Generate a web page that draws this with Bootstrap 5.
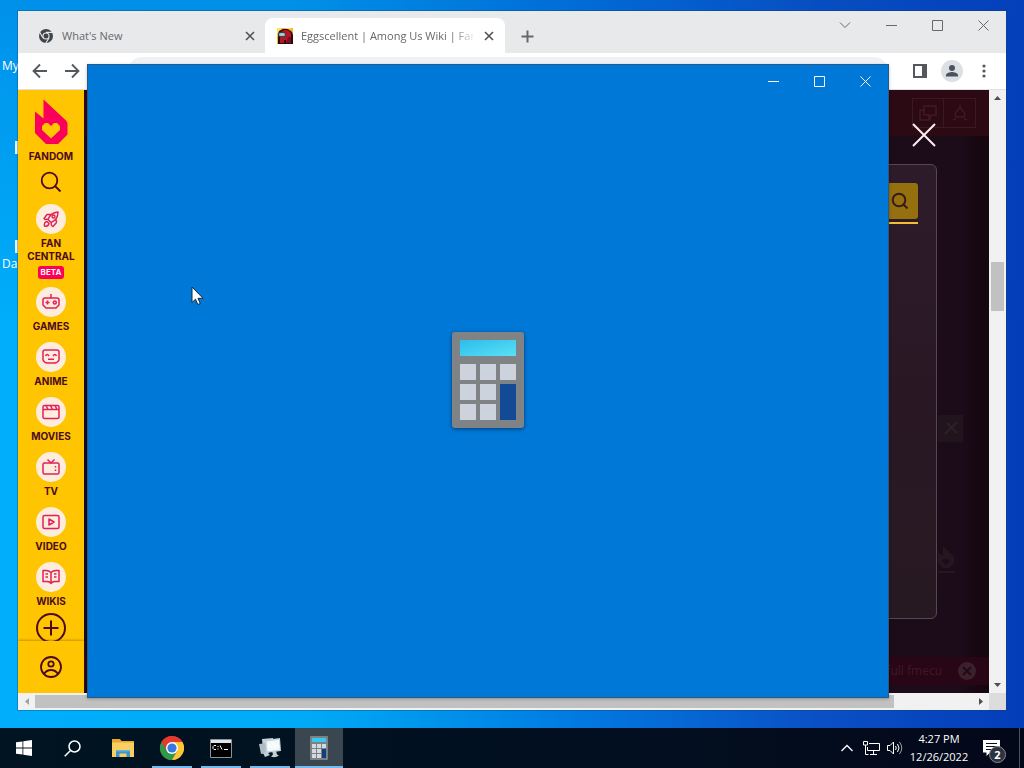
<!DOCTYPE html>
<html lang="en">
<head>
<meta charset="utf-8">
<meta name="viewport" content="width=device-width, initial-scale=1">
<title>Desktop</title>
<link href="https://cdn.jsdelivr.net/npm/bootstrap@5.3.0/dist/css/bootstrap.min.css" rel="stylesheet">
<style>
  body { font-family: "Open Sans", "Noto Sans", sans-serif; font-size: 12px; line-height: 16px; }
  button { border: 0; padding: 0; background: none; color: inherit; }
  svg { display: block; }
  .line { fill: none; stroke: currentColor; }

  .wallpaper { background:
    linear-gradient(to bottom, rgba(0,70,190,.28), rgba(0,70,190,0) 45%),
    linear-gradient(to right, #00aefb 0, #00aaf6 30%, #0082e4 52%, #0a50c4 80%, #043db8 100%); }
  .shortcut { position: absolute; left: 2px; color: #fff; }
  .shortcut-file { position: absolute; left: 15px; width: 12px; height: 13px; background: #e4f3fd; }

  /* Browser window */
  .browser { position: absolute; inset: 11px 18px 18px 18px; background: #fff; box-shadow: 0 0 0 1px rgba(20,60,110,.35); }
  .tab-strip { height: 42px; background: #e8e9eb; color: #66686b; }
  .tab-item { width: 240px; height: 35px; margin-top: 7px; padding: 0 8px 0 12px; }
  .tab-item.first { margin-left: 7px; padding: 0 7px 0 13px; }
  .tab-item.current { background: #fff; border-radius: 8px 8px 0 0; }
  .tab-title { white-space: nowrap; overflow: hidden; font-size: 11px; }
  .current .tab-title { -webkit-mask-image: linear-gradient(to right, #000 150px, transparent 176px); mask-image: linear-gradient(to right, #000 150px, transparent 176px); }
  .tab-close { width: 16px; height: 16px; color: #505255; }
  .caption-btn { width: 46px; height: 28px; display: flex; align-items: center; justify-content: center; }
  .tool-row { height: 37px; padding: 0 6px 0 2px; color: #54575b; border-bottom: 1px solid #e0e0e2; }
  .tool-btn { width: 32px; height: 32px; display: flex; align-items: center; justify-content: center; }
  .address { height: 28px; border: 0; border-radius: 14px; background: #eff1f4; min-width: 0; }
  .avatar { width: 22px; height: 22px; background: #dcdfe4; }

  /* Fandom rail */
  .rail { width: 66px; background: #ffc500; color: #4d0a1c; font: 700 10px/13px Inter, Roboto, sans-serif; }
  .rail a { color: inherit; text-decoration: none; text-align: center; display: flex; flex-direction: column; align-items: center; flex: none; }
  .rail-list { padding-top: 9px; min-height: 0; }
  .rail-brand { gap: 5px; }
  .rail-find { margin: 8px 0 11px; }
  .rail-item { padding-bottom: 9px; }
  .rail-item.last { padding-bottom: 5px; }
  .disc { width: 30px; height: 30px; border-radius: 50%; background: #feecdc; color: #e0205a; display: flex; align-items: center; justify-content: center; margin-bottom: 3px; }
  .beta { background: #fa005a; color: #ffeef2; border-radius: 3px; width: 26px; font-size: 8px; margin-top: 3px; }
  .rail-foot { height: 52px; box-shadow: 0 -1px 2px rgba(120,80,0,.4); z-index: 1; background: #ffc500; }

  /* Wiki page under the overlay */
  .wiki { background: linear-gradient(to right, transparent 97%, #16060f 99%), #1c0b19; }
  .wiki-head { height: 46px; background: #2c0a14; padding: 8px 13px; }
  .head-tool { width: 32px; height: 30px; border: 1px solid #3d1721; color: #401a24; display: flex; align-items: center; justify-content: center; }
  .head-tool + .head-tool { border-left: 0; }
  .close-overlay { position: absolute; right: 53px; top: 33px; color: #fbeef0; }
  .search-modal { position: absolute; left: 40px; right: 52px; top: 74px; bottom: 74px; background: linear-gradient(#2e1b2a, #291824 50%, #271922); border: 1px solid #584650; border-radius: 6px; padding: 18px; }
  .search-field { background: transparent; border: 0; min-width: 0; }
  .search-line { border-bottom: 2px solid #f3bd35; padding-bottom: 3px; }
  .search-go { width: 36px; height: 36px; background: #95700f; color: #3a1a1a; border-radius: 0 3px 3px 0; display: flex; align-items: center; justify-content: center; }
  .ghost-tile { position: absolute; right: 26px; top: 325px; width: 25px; height: 27px; background: #21141d; color: #2e2128; }
  .ghost-flame { position: absolute; right: 34px; top: 456px; color: #26161f; }
  .promo { position: absolute; left: 0; right: 0; bottom: 8px; height: 28px; padding-right: 13px; background: #280615; color: #411826; }
  .promo-x { width: 18px; height: 18px; border-radius: 50%; background: #3b212c; color: #210a16; }

  .scroll-v { width: 17px; background: #f1f1f1; }
  .scroll-h { height: 17px; background: #f1f1f1; color: #505050; }
  .scroll-v .thumb { width: 13px; height: 49px; background: #c1c1c1; }
  .scroll-h .thumb { background: #c1c1c1; height: 13px; }
  .arrow { width: 17px; height: 17px; display: flex; align-items: center; justify-content: center; color: #505050; flex: none; }
  .corner { width: 17px; height: 17px; background: #dcdcdc; }

  /* Calculator splash */
  .calc { position: absolute; inset: 65px 136px 31px 88px; padding-bottom: 2px; background: #0078d7; box-shadow: 0 0 0 1px #275987, 0 1px 3px 1px rgba(0,0,0,.25); color: #fff; }
  .calc-bar { position: absolute; top: 0; left: 0; right: 0; }
  .calc-bar .caption-btn { height: 32px; }
  .calc-logo { filter: drop-shadow(0 1px 2px rgba(0,20,60,.6)); }
  .pointer { position: absolute; left: 191px; top: 286px; }

  /* Taskbar */
  .taskbar { height: 40px; background: linear-gradient(to right, #001421, #020f20 60%, #030819); color: #fff; }
  .task-btn { width: 48px; height: 40px; display: flex; align-items: center; justify-content: center; position: relative; }
  .task-apps { gap: 1px; margin-left: 3px; }
  .task-btn.open::after { content: ""; position: absolute; left: 4px; right: 4px; bottom: 0; height: 2px; background: #76b9ed; }
  .task-btn.focused { background: #3a4750; }
  .task-btn.focused::after { left: 0; right: 0; }
  .tray-btn { width: 24px; height: 40px; display: flex; align-items: center; justify-content: center; }
  .clock { width: 64px; font-size: 11px; line-height: 18px; }
  .notice { width: 40px; height: 40px; position: relative; display: flex; align-items: center; justify-content: center; }
  .notice-count { position: absolute; left: 18px; top: 18px; width: 17px; height: 17px; border-radius: 50%; background: #2c333e; border: 1px solid #858b94; font: 700 11px/15px "Open Sans", sans-serif; }
  .show-desktop { width: 5px; height: 40px; border-left: 1px solid #4b5260; }
</style>
</head>
<body>
<div class="d-flex flex-column vh-100 overflow-hidden">
  <main class="wallpaper flex-grow-1 position-relative overflow-hidden">
    <span class="shortcut" style="top:58px">My</span>
    <span class="shortcut-file" style="top:141px"></span>
    <span class="shortcut-file" style="top:240px"></span>
    <span class="shortcut" style="top:256px">Da</span>

    <section class="browser d-flex flex-column" aria-label="Browser">
      <div class="tab-strip d-flex">
        <div class="tab-item first d-flex align-items-center gap-2">
          <svg width="16" height="16" viewBox="0 0 16 16" class="flex-shrink-0"><circle cx="8" cy="8" r="7" fill="#414449"/><circle cx="8" cy="8" r="3.600" fill="#e8e9eb"/><circle cx="8" cy="8" r="2.500" fill="#414449"/><path d="M8 4.400h7.200M4.900 9.800 1.400 3.700M11.100 9.800l-3.700 6" stroke="#e8e9eb" stroke-width="1.100"/></svg>
          <span class="tab-title flex-grow-1">What's New</span>
          <button class="tab-close" aria-label="Close tab"><svg width="16" height="16" viewBox="0 0 16 16" class="line" stroke-width="1.600"><path d="M4 4l8 8M12 4l-8 8"/></svg></button>
        </div>
        <div class="tab-item current d-flex align-items-center gap-2">
          <svg width="16" height="16" viewBox="0 0 16 16" class="flex-shrink-0"><path fill="#efbd25" d="M0 0h16v16H0z"/><path fill="#f9e264" d="M0 0h5L2 5 0 6zM9 0h5l-4 4z"/><path fill="#2b0a10" d="M1 16V7l1-4 4-2h5l4 3 1 3v9z"/><path fill="#b71525" d="M3 15V8l1-4 3-2h4l3 3v10H9v-3H7v3z"/><path fill="#7c0d1e" d="M11 9h3v6h-5l1-3z"/><rect x="1" y="4" width="8" height="5" rx="2.300" fill="#34424e"/><rect x="2" y="5" width="6" height="3" rx="1.500" fill="#a5c9d7"/></svg>
          <span class="tab-title flex-grow-1">Eggscellent | Among Us Wiki | Fan</span>
          <button class="tab-close" aria-label="Close tab"><svg width="16" height="16" viewBox="0 0 16 16" class="line" stroke-width="1.600"><path d="M4 4l8 8M12 4l-8 8"/></svg></button>
        </div>
        <button class="ms-3 mt-2" aria-label="New tab"><svg width="13" height="13" viewBox="0 0 13 13" class="line" stroke-width="2"><path d="M6.500 .5v12M.5 6.500h12"/></svg></button>
        <div class="d-flex ms-auto">
          <button class="caption-btn" aria-label="Search tabs"><svg width="12" height="12" viewBox="0 0 12 12" class="line"><path d="M1 3.500l5 5 5-5"/></svg></button>
          <button class="caption-btn" aria-label="Minimize"><svg width="11" height="11" viewBox="0 0 11 11" class="line"><path d="M0 5.500h11"/></svg></button>
          <button class="caption-btn" aria-label="Maximize"><svg width="11" height="11" viewBox="0 0 11 11" class="line"><path d="M.5 .5h10v10H.5z"/></svg></button>
          <button class="caption-btn" aria-label="Close"><svg width="11" height="11" viewBox="0 0 11 11" class="line"><path d="M.5 .5l10 10M10.500 .5l-10 10"/></svg></button>
        </div>
      </div>

      <div class="tool-row d-flex align-items-center">
        <div class="d-flex ps-1 me-4">
          <button class="tool-btn" aria-label="Back"><svg width="16" height="16" viewBox="0 0 16 16" class="line" stroke-width="1.800"><path d="M15 8H2M8 1.500L1.500 8 8 14.500"/></svg></button>
          <button class="tool-btn" aria-label="Forward"><svg width="16" height="16" viewBox="0 0 16 16" class="line" stroke-width="1.800"><path d="M1 8h13M8 1.500L14.500 8 8 14.500"/></svg></button>
        </div>
        <input class="address flex-grow-1 ms-3 me-3" type="text" aria-label="Address">
        <button class="tool-btn" aria-label="Side panel"><svg width="14" height="14" viewBox="0 0 14 14"><path d="M1 1h12v12H1z" class="line" stroke-width="2"/><path d="M9 1h4v12H9z" fill="currentColor"/></svg></button>
        <button class="tool-btn" aria-label="Profile"><span class="avatar rounded-circle d-flex align-items-center justify-content-center"><svg width="14" height="14" viewBox="0 0 14 14" fill="#4d535e"><circle cx="7" cy="4" r="3"/><path d="M1 12.500V11c0-2 4-3 6-3s6 1 6 3v1.500z"/></svg></span></button>
        <button class="tool-btn" aria-label="Menu"><svg width="4" height="14" viewBox="0 0 4 14" fill="currentColor"><circle cx="2" cy="2" r="1.600"/><circle cx="2" cy="7" r="1.600"/><circle cx="2" cy="12" r="1.600"/></svg></button>
      </div>

      <div class="d-flex flex-grow-1 overflow-hidden">
        <nav class="rail d-flex flex-column flex-shrink-0" aria-label="Fandom">
          <div class="rail-list flex-grow-1 overflow-hidden d-flex flex-column">
            <a href="#" class="rail-brand"><svg width="34" height="46" viewBox="0 0 34 46"><path fill="#fa005a" fill-rule="evenodd" d="M9.500 .5 32 21.500q1.500 1.500 1.500 3.500v10.500L24 45H12L1 34V12.500l8.500 7zM17 39.500l9-8.500v-4l-3-3h-3l-3 3-3-3h-3l-3 3v4z"/></svg><span>FANDOM</span></a>
            <a href="#" class="rail-find" aria-label="Search"><svg width="22" height="22" viewBox="0 0 22 22" class="line" stroke-width="1.800"><circle cx="9.500" cy="9.500" r="7.800"/><path d="M15 15l5.500 5.500"/></svg></a>
            <a href="#" class="mb-2"><span class="disc"><svg width="18" height="18" viewBox="0 0 18 18" class="line" stroke-width="1.400" stroke-linejoin="round"><path d="M6 9.500c1.500-4 4-7 10-7.500 0 5-2 8.500-7 10.500zM6.500 9 3 9.500l-1-1 3-4h4M9 12.500l.5 3 1.500 1 3.500-4-.5-3.500M5 11.500c-2 0-3 2-2.500 4.500 2 .5 4-.5 4.500-2.500z"/><circle cx="11.500" cy="6.500" r="1.500"/></svg></span><span>FAN<br>CENTRAL</span><span class="beta">BETA</span></a>
            <a href="#" class="rail-item"><span class="disc"><svg width="18" height="18" viewBox="0 0 18 18" class="line" stroke-width="1.500"><path d="M9 1v4M1 7q0-2 2-2h12q2 0 2 2v5l-3 3H4l-3-3zM3.500 9.500h4M5.500 7.500v4"/><circle cx="12.800" cy="9.500" r="1.500"/></svg></span>GAMES</a>
            <a href="#" class="rail-item"><span class="disc"><svg width="18" height="18" viewBox="0 0 18 18" class="line" stroke-width="1.500"><path d="M1 4q0-2 2-2h12q2 0 2 2v8q-1.500 3-4.500 3h-7Q2.500 15 1 12zM3.500 8q1.500-3 3.500 0M11 8q2-3 3.500 0M6 11.200h6"/></svg></span>ANIME</a>
            <a href="#" class="rail-item"><span class="disc"><svg width="18" height="18" viewBox="0 0 18 18" class="line" stroke-width="1.500"><rect x="1" y="2.500" width="16" height="13" rx="1.500"/><path d="M1 6.500h16M4 2.500l2 4M8.500 2.500l2 4M13 2.500l2 4"/></svg></span>MOVIES</a>
            <a href="#" class="rail-item"><span class="disc"><svg width="18" height="18" viewBox="0 0 18 18" class="line" stroke-width="1.500"><rect x="1" y="5" width="16" height="11" rx="1.500"/><path d="M5.500 1.500 9 5l3.500-3.500M13.500 8v1.500M13.500 11.500V13"/></svg></span>TV</a>
            <a href="#" class="rail-item"><span class="disc"><svg width="18" height="18" viewBox="0 0 18 18" class="line" stroke-width="1.500" stroke-linejoin="round"><rect x="1" y="2.500" width="16" height="13" rx="1.500"/><path d="M7 6l5 3-5 3z"/></svg></span>VIDEO</a>
            <a href="#" class="rail-item last"><span class="disc"><svg width="18" height="18" viewBox="0 0 18 18" class="line" stroke-width="1.500" stroke-linejoin="round"><path d="M9 4.500Q7 2.500 4 2.500H1v11h4q3 0 4 2 1-2 4-2h4v-11h-3q-3 0-5 2zM9 4.500v11M3.500 6H6M3.500 9H6M12 6h2.500M12 9h2.500"/></svg></span>WIKIS</a>
            <a href="#" aria-label="Start a wiki"><svg width="30" height="30" viewBox="0 0 30 30" class="line" stroke-width="2"><circle cx="15" cy="15" r="14"/><path d="M15 7.500v15M7.500 15h15"/></svg></a>
          </div>
          <a href="#" class="rail-foot justify-content-center" aria-label="Account"><svg width="22" height="22" viewBox="0 0 22 22" class="line" stroke-width="1.800"><circle cx="11" cy="11" r="10"/><circle cx="11" cy="8" r="2.700"/><path d="M4 18q2.500-4 7-4t7 4"/></svg></a>
        </nav>

        <div class="wiki flex-grow-1 position-relative overflow-hidden">
          <div class="wiki-head d-flex justify-content-end">
            <button class="head-tool" aria-label="Discuss"><svg width="18" height="18" viewBox="0 0 18 18" class="line" stroke-width="1.500"><path d="M5 2h12v9h-4l-3 3v-3H5zM5 6H1v10h10v-2"/></svg></button>
            <button class="head-tool" aria-label="Activity"><svg width="16" height="18" viewBox="0 0 16 18" class="line" stroke-width="1.500"><path d="M8 3.500 12.500 9v4h-9V9zM8 3.500V1M1 15.500h3M12 15.500h3"/></svg></button>
          </div>
          <div class="search-modal">
            <div class="search-line d-flex">
              <input class="search-field flex-grow-1" type="text" aria-label="Search wiki">
              <button class="search-go" aria-label="Search"><svg width="18" height="18" viewBox="0 0 18 18" class="line" stroke-width="2"><circle cx="8" cy="8" r="6.300"/><path d="M12.500 12.500l4 4"/></svg></button>
            </div>
          </div>
          <button class="close-overlay" aria-label="Close search"><svg width="24" height="24" viewBox="0 0 24 24" class="line" stroke-width="2"><path d="M1 1l22 22M23 1L1 23"/></svg></button>
          <div class="ghost-tile d-flex align-items-center justify-content-center"><svg width="14" height="14" viewBox="0 0 14 14" class="line" stroke-width="2"><path d="M1 13 13 1M3 2l10 10"/></svg></div>
          <svg class="ghost-flame" width="17" height="28" viewBox="0 0 17 28"><path fill="currentColor" fill-rule="evenodd" d="M5 0l11 11v6l-5 5H5l-5-5V6l5 4zM8 19l4-4-2-2-2 1-2-1-2 2zM0 25h17v2H0z"/></svg>
          <div class="promo d-flex align-items-center justify-content-end gap-3"><span>full fmecu</span><span class="promo-x d-flex align-items-center justify-content-center"><svg width="10" height="10" viewBox="0 0 10 10" class="line" stroke-width="2"><path d="M1 1l8 8M9 1L1 9"/></svg></span></div>
        </div>

        <div class="scroll-v d-flex flex-column align-items-center">
          <span class="arrow"><svg width="7" height="4" viewBox="0 0 7 4" fill="currentColor"><path d="M0 4 3.500 0 7 4z"/></svg></span>
          <div class="flex-grow-1 d-flex flex-column align-items-center w-100">
            <span style="flex:155 1 0"></span><span class="thumb"></span><span style="flex:365 1 0"></span>
          </div>
          <span class="arrow"><svg width="7" height="4" viewBox="0 0 7 4" fill="currentColor"><path d="M0 0h7L3.500 4z"/></svg></span>
        </div>
      </div>

      <div class="scroll-h d-flex align-items-center">
        <span class="arrow"><svg width="4" height="7" viewBox="0 0 4 7" fill="#a0a0a0"><path d="M4 0v7L0 3.500z"/></svg></span>
        <span class="thumb" style="flex:859 1 0"></span><span style="flex:78 1 0"></span>
        <span class="arrow"><svg width="4" height="7" viewBox="0 0 4 7" fill="currentColor"><path d="M0 0v7l4-3.500z"/></svg></span>
        <span class="corner"></span>
      </div>
    </section>

    <section class="calc d-flex align-items-center justify-content-center" aria-label="Calculator">
      <div class="calc-bar d-flex justify-content-end">
        <button class="caption-btn" aria-label="Minimize"><svg width="11" height="11" viewBox="0 0 11 11" class="line"><path d="M0 5.500h11"/></svg></button>
        <button class="caption-btn" aria-label="Maximize"><svg width="11" height="11" viewBox="0 0 11 11" class="line"><path d="M.5 .5h10v10H.5z"/></svg></button>
        <button class="caption-btn" aria-label="Close"><svg width="11" height="11" viewBox="0 0 11 11" class="line"><path d="M.5 .5l10 10M10.500 .5l-10 10"/></svg></button>
      </div>
      <svg class="calc-logo" width="72" height="96" viewBox="0 0 72 96">
        <defs><linearGradient id="lcd" x1="0" x2="1" y1="0" y2="1"><stop stop-color="#2bbdec"/><stop offset="1" stop-color="#5be0f6"/></linearGradient></defs>
        <rect width="72" height="96" rx="3" fill="#808386"/>
        <rect x="8" y="8" width="56" height="16" fill="url(#lcd)"/>
        <path d="M8 32h16v16H8zM28 32h16v16H28zM48 32h16v16H48zM8 52h16v16H8zM28 52h16v16H28zM8 72h16v16H8zM28 72h16v16H28z" fill="#ccd3dd"/>
        <rect x="48" y="52" width="16" height="36" fill="#134a95"/>
      </svg>
    </section>

    <svg class="pointer" width="13" height="20" viewBox="0 0 13 20"><path d="M1 1v15.500l3.500-3.300 2.300 5.300 2.500-1-2.300-5.200H12z" fill="#fff" stroke="#102840" stroke-width="1"/></svg>
  </main>

  <footer class="taskbar d-flex flex-shrink-0">
    <button class="task-btn" aria-label="Start"><svg width="16" height="16" viewBox="0 0 16 16" fill="#fff"><path d="M0 2.300 6.500 1.400v6.200H0zM7.300 1.300 16 0v7.600H7.300zM0 8.400h6.500v6.200L0 13.700zM7.300 8.400H16V16l-8.700-1.300z"/></svg></button>
    <button class="task-btn" aria-label="Search"><svg width="17" height="17" viewBox="0 0 17 17" class="line" stroke-width="1.500"><circle cx="10.500" cy="6.500" r="5.500"/><path d="M6.500 10.500.7 16.300"/></svg></button>
    <div class="task-apps d-flex">
      <button class="task-btn" aria-label="File Explorer"><svg width="22" height="18" viewBox="0 0 22 18"><path fill="#e8a82c" d="M0 0h8l1.500 2H22v4H0z"/><path fill="#f9cf62" d="M0 3.500h22V18H0z"/><path fill="#3d93cb" d="M4 18v-7h14v7h-3.500v-3.500h-7V18z"/><path fill="#62b4e0" d="M4 11h14v1.500H4z"/></svg></button>
      <button class="task-btn open" aria-label="Chrome"><svg width="24" height="24" viewBox="0 0 24 24"><circle cx="12" cy="12" r="12" fill="#e33b2e"/><path fill="#2b9a49" d="M1.600 6A12 12 0 0 0 12 24l5.200-9L12 12l-5.200 3z"/><path fill="#fcc934" d="M22.400 6A12 12 0 0 1 12 24l5.200-9L12 6z"/><path fill="#e33b2e" d="M1.600 6a12 12 0 0 1 20.800 0H12l-5.200 9z"/><circle cx="12" cy="12" r="6" fill="#fff"/><circle cx="12" cy="12" r="4.600" fill="#3479e4"/></svg></button>
      <button class="task-btn open" aria-label="Command Prompt"><svg width="22" height="19" viewBox="0 0 22 19"><path d="M.5 .5h21v18H.5z" fill="#000" stroke="#8d9498"/><path d="M1 1h20v3H1z" fill="#dfe5e8"/><path d="M6 6.500H4L3 7.500v2l1 1h2M8 7v1M8 9.500v1M10 6.500l2 4M14 10.500h4" class="line" stroke="#fff"/></svg></button>
      <button class="task-btn open" aria-label="Performance Monitor"><svg width="24" height="22" viewBox="0 0 24 22"><path d="M4 2l11-1 1 10-11 2z" fill="#c4cfd4"/><path d="M1 7l9-1 1 10-8 1z" fill="#aebcc5"/><path d="M14 14l4-.5 1 4 2 1q-4 3-8 1l2-2zM5 16l4-1 3 3-5 2z" fill="#c3cdd2"/><path d="M7 3l15-2 1 13-15 2z" fill="#c6d3da"/><path d="M8.500 4.500 21 2.800l.8 9.900-12.300 1.600z" fill="#f1f9fc"/><path d="M9.500 11l2-4 2 4 2-6 2 6 1-4 3 3" class="line" stroke="#3788b5"/></svg></button>
      <button class="task-btn open focused" aria-label="Calculator"><svg width="18" height="24" viewBox="0 0 18 24"><rect width="18" height="24" rx="1" fill="#7b8185"/><path fill="#39c7ee" d="M2 2h14v4H2z"/><path fill="#d2d9e0" d="M2 8h4v4H2zM7 8h4v4H7zM12 8h4v4h-4zM2 13h4v4H2zM7 13h4v4H7zM2 18h4v4H2zM7 18h4v4H7z"/><path fill="#123f7c" d="M12 13h4v9h-4z"/></svg></button>
    </div>
    <div class="d-flex ms-auto align-items-center">
      <button class="tray-btn" aria-label="Hidden icons"><svg width="12" height="8" viewBox="0 0 12 8" class="line" stroke-width="1.300"><path d="M.5 7 6 1.500 11.500 7"/></svg></button>
      <button class="tray-btn" aria-label="Network"><svg width="17" height="14" viewBox="0 0 17 14" class="line"><path d="M6 2.500h10.500v7H4.500V6M10.500 9.500v4M7 13.500h7M.5 .5h4v3.500h-4zM2.500 4v9.500h3"/></svg></button>
      <button class="tray-btn" aria-label="Volume"><svg width="16" height="14" viewBox="0 0 16 14" class="line"><path d="M.5 4.500h2.500l3.500-3.500v12L3 9.500H.5zM8.500 5q1.500 2 0 4M10.500 3q3 4 0 8"/><path d="M12.500 1q4.500 6 0 12" opacity=".6"/></svg></button>
      <button class="clock text-center">4:27 PM<br>12/26/2022</button>
      <button class="notice" aria-label="Notifications, 2 new"><svg width="17" height="16" viewBox="0 0 17 16"><path d="M0 0h17v12.500H7L3.500 16v-3.500H0z" fill="#fff"/><path d="M3 3.500h11M3 6.500h11M3 9.500h8" stroke="#071122"/></svg><span class="notice-count">2</span></button>
      <button class="show-desktop ms-2" aria-label="Show desktop"></button>
    </div>
  </footer>
</div>
<script src="https://cdn.jsdelivr.net/npm/bootstrap@5.3.0/dist/js/bootstrap.bundle.min.js"></script>
</body>
</html>
